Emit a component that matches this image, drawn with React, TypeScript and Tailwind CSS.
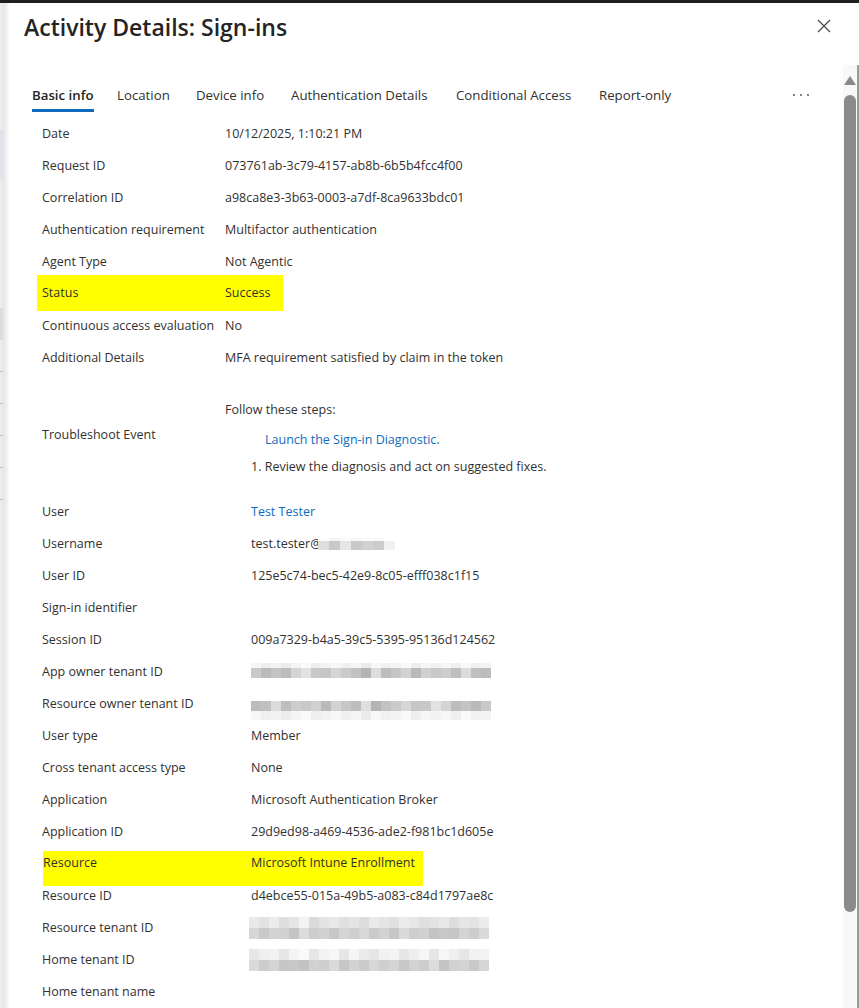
import React from "react";

type Row = { label: string; value?: React.ReactNode };

const shadesA = ["#c9c9c9","#bababa","#c4c4c4","#bcbcbc","#d4d4d4","#e2e2e2","#c8c8c8","#c6c6c6","#d6d6d6","#cbcbcb","#c2c2c2","#b4b4b4","#dedede","#bdbdbd","#c6c6c6","#d2d2d2","#b9b9b9","#d0d0d0","#c8c8c8","#cdcdcd","#bebebe","#dcdcdc","#c0c0c0","#bcbcbc"];
const shadesB = ["#f6f6f6","#efefef","#f2f2f2","#ececec","#f4f4f4","#fafafa","#eeeeee","#f3f3f3","#f7f7f7","#f0f0f0","#f5f5f5","#ebebeb","#f8f8f8","#f1f1f1","#f4f4f4","#f9f9f9","#eeeeee","#f6f6f6","#f2f2f2","#f7f7f7","#efefef","#f9f9f9","#f1f1f1","#f3f3f3"];
const shadesC = ["#e9e9e9","#e2e2e2","#ececec","#dedede","#e6e6e6","#f3f3f3","#dadada","#e3e3e3","#e8e8e8","#e0e0e0","#e4e4e4","#dcdcdc","#e9e9e9","#e5e5e5","#e1e1e1","#ebebeb","#e7e7e7","#dfdfdf","#e2e2e2","#e8e8e8","#dddddd","#e6e6e6","#e3e3e3","#ececec"];
const shadesD = ["#d6d6d6","#c9c9c9","#d3d3d3","#d1d1d1","#c4c4c4","#dcdcdc","#cdcdcd","#d2d2d2","#c8c8c8","#d5d5d5","#cfcfcf","#d7d7d7","#cbcbcb","#d3d3d3","#c7c7c7","#dadada","#cecece","#d1d1d1","#c3c3c3","#c8c8c8","#c6c6c6","#d4d4d4","#cdcdcd","#dadada"];

function Blur({ rows, cell = 10 }: { rows: { h: number; shades: string[] }[]; cell?: number }) {
  return (
    <div className="flex flex-col">
      {rows.map((r, i) => (
        <div key={i} className="flex">
          {r.shades.map((c, j) => (
            <div key={j} style={{ width: cell, height: r.h, background: c }} />
          ))}
        </div>
      ))}
    </div>
  );
}

const group1: Row[] = [
  { label: "Date", value: "10/12/2025, 1:10:21 PM" },
  { label: "Request ID", value: "073761ab-3c79-4157-ab8b-6b5b4fcc4f00" },
  { label: "Correlation ID", value: "a98ca8e3-3b63-0003-a7df-8ca9633bdc01" },
  { label: "Authentication requirement", value: "Multifactor authentication" },
  { label: "Agent Type", value: "Not Agentic" },
];

const tabs = [
  { name: "Basic info", w: "w-[85px]", active: true },
  { name: "Location", w: "w-[79px]" },
  { name: "Device info", w: "w-[95px]" },
  { name: "Authentication Details", w: "w-[165px]" },
  { name: "Conditional Access", w: "w-[143px]" },
  { name: "Report-only", w: "w-[120px]" },
];

function Line({ label, children, labelW = "w-[183px]" }: { label: string; children?: React.ReactNode; labelW?: string }) {
  return (
    <div className="flex h-8 items-center">
      <div className={`${labelW} shrink-0`}>{label}</div>
      <div className="flex items-center">{children}</div>
    </div>
  );
}

export default function App() {
  return (
    <div className="flex h-[1008px] w-[859px] flex-col overflow-hidden bg-white font-['Segoe_UI','Open_Sans',sans-serif] text-[12.5px] leading-[18px] text-[#323130]">
      <div className="h-[3px] shrink-0 bg-[#1f1f1f]" />
      <div className="flex min-h-0 flex-1">
        {/* background page peeking at left */}
        <div className="flex w-[3px] shrink-0 flex-col bg-[#ececec]">
          <div className="h-[127px]" />
          <div className="h-[50px] bg-[#e4e1ea]" />
          <div className="h-[128px]" />
          <div className="h-[32px] bg-[#dcdcdc]" />
          <div className="h-[32px] border-b border-[#bdbdbd]" />
          <div className="h-[32px] border-b border-[#bdbdbd]" />
          <div className="h-[32px] border-b border-[#bdbdbd]" />
          <div className="h-[32px] border-b border-[#bdbdbd]" />
          <div className="h-[32px] border-b border-[#bdbdbd]" />
        </div>
        <div className="w-[7px] shrink-0 bg-gradient-to-r from-[#e3e3e3] to-white" />

        <div className="flex min-w-0 flex-1 flex-col">
          {/* header */}
          <div className="flex h-[62px] shrink-0 items-start justify-between">
            <h1 className="ml-[14px] mt-[8px] text-[23px] font-semibold leading-[32px] text-[#242424]">
              Activity Details: Sign-ins
            </h1>
            <svg className="mr-[28px] mt-[16px]" width="14" height="14" viewBox="0 0 14 14">
              <path d="M1 1 L13 13 M13 1 L1 13" stroke="#424242" strokeWidth="1.1" />
            </svg>
          </div>

          <div className="flex min-h-0 flex-1">
            <div className="min-w-0 flex-1">
              {/* tabs */}
              <div className="flex items-start pl-[22px] pt-[20px]">
                {tabs.map((t) => (
                  <div key={t.name} className={`${t.w} shrink-0`}>
                    <div className={`inline-flex flex-col text-[13.25px] leading-[20px] ${t.active ? "font-semibold text-[#242424]" : "text-[#323130]"}`}>
                      {t.name}
                      <div className={`mt-[4px] h-[3px] ${t.active ? "bg-[#0f6cbd]" : "bg-transparent"}`} />
                    </div>
                  </div>
                ))}
                <div className="ml-[74px] mt-[9px] flex gap-[5px]">
                  <span className="h-[2px] w-[2px] rounded-full bg-[#605e5c]" />
                  <span className="h-[2px] w-[2px] rounded-full bg-[#605e5c]" />
                  <span className="h-[2px] w-[2px] rounded-full bg-[#605e5c]" />
                </div>
              </div>

              {/* details */}
              <div className="mt-[6px] flex flex-col pl-[32px]">
                {group1.map((r) => (
                  <Line key={r.label} label={r.label}>
                    {r.value}
                  </Line>
                ))}
                <div className="-mb-[1px] -ml-[5px] -mt-[3px] flex h-9 w-[246px] items-center bg-[#ffff00] pl-[5px]">
                  <div className="w-[183px] shrink-0">Status</div>
                  <div>Success</div>
                </div>
                <Line label="Continuous access evaluation">No</Line>
                <Line label="Additional Details">MFA requirement satisfied by claim in the token</Line>

                <div className="flex h-[122px]">
                  <div className="flex w-[183px] shrink-0 items-center">Troubleshoot Event</div>
                  <div className="flex flex-col pt-[27px]">
                    <div>Follow these steps:</div>
                    <div className="ml-[40px] mt-[12px] text-[#0f6cbd]">Launch the Sign-in Diagnostic.</div>
                    <div className="ml-[26px] mt-[9px]">1. Review the diagnosis and act on suggested fixes.</div>
                  </div>
                </div>

                <Line label="User" labelW="w-[209px]">
                  <span className="text-[#0f6cbd]">Test Tester</span>
                </Line>
                <Line label="Username" labelW="w-[209px]">
                  <span>test.tester@</span>
                  <div className="-ml-[3px]">
                    <Blur
                      cell={11}
                      rows={[
                        { h: 3, shades: ["#fbfbfb","#f6f6f6","#fafafa","#f7f7f7","#fcfcfc","#f8f8f8","#ffffff"] },
                        { h: 9, shades: ["#dedede","#c9c9c9","#e6e6e6","#c9c9c9","#d1d1d1","#cccccc","#f1f1f1"] },
                      ]}
                    />
                  </div>
                </Line>
                <Line label="User ID" labelW="w-[209px]">125e5c74-bec5-42e9-8c05-efff038c1f15</Line>
                <Line label="Sign-in identifier" labelW="w-[209px]" />
                <Line label="Session ID" labelW="w-[209px]">009a7329-b4a5-39c5-5395-95136d124562</Line>
                <Line label="App owner tenant ID" labelW="w-[209px]">
                  <div className="-mt-[4px]">
                    <Blur rows={[{ h: 5, shades: shadesB }, { h: 10, shades: shadesA }]} />
                  </div>
                </Line>
                <Line label="Resource owner tenant ID" labelW="w-[209px]">
                  <div className="mt-[12px]">
                    <Blur rows={[{ h: 10, shades: shadesA.slice().reverse() }, { h: 9, shades: shadesB }]} />
                  </div>
                </Line>
                <Line label="User type" labelW="w-[209px]">Member</Line>
                <Line label="Cross tenant access type" labelW="w-[209px]">None</Line>
                <Line label="Application" labelW="w-[209px]">Microsoft Authentication Broker</Line>
                <Line label="Application ID" labelW="w-[209px]">29d9ed98-a469-4536-ade2-f981bc1d605e</Line>
                <div className="-mb-[6px] ml-[1px] mt-[3px] flex h-[35px] w-[380px] items-start bg-[#ffff00] pt-[3px]">
                  <div className="w-[208px] shrink-0">Resource</div>
                  <div>Microsoft Intune Enrollment</div>
                </div>
                <Line label="Resource ID" labelW="w-[209px]">d4ebce55-015a-49b5-a083-c84d1797ae8c</Line>
                <Line label="Resource tenant ID" labelW="w-[207px]">
                  <Blur rows={[{ h: 11, shades: shadesC }, { h: 11, shades: shadesD }]} />
                </Line>
                <Line label="Home tenant ID" labelW="w-[207px]">
                  <Blur rows={[{ h: 11, shades: shadesB.map((c, i) => (i % 3 === 0 ? "#e6e6e6" : c)) }, { h: 11, shades: shadesD.slice().reverse() }]} />
                </Line>
                <Line label="Home tenant name" labelW="w-[209px]" />
              </div>
            </div>

            {/* scrollbar */}
            <div className="flex w-[16px] shrink-0 flex-col items-center border-r-2 border-[#9a9a9a] bg-[#f8f8f8] pt-[11px]">
              <svg width="12" height="9" viewBox="0 0 12 9">
                <path d="M6 0 L12 9 L0 9 Z" fill="#8a8a8a" />
              </svg>
              <div className="mt-[10px] h-[817px] w-[12px] rounded-full bg-[#8b8b8b]" />
            </div>
          </div>
        </div>
      </div>
    </div>
  );
}
